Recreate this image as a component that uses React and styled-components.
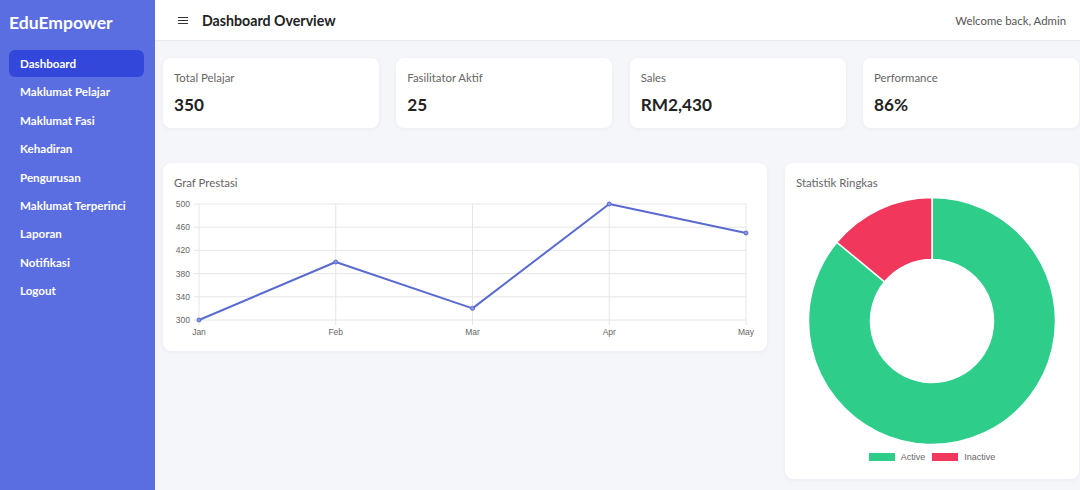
import React from "react";
import styled, { createGlobalStyle } from "styled-components";

const Global = createGlobalStyle`
  html, body { margin: 0; padding: 0; }
  body {
    font-family: "Lato", "Noto Sans", sans-serif;
    background: #f5f6fa;
    color: #222;
  }
  * { box-sizing: border-box; }
`;

const Layout = styled.div`
  display: flex;
  width: 1080px;
  height: 490px;
  overflow: hidden;
`;

const Sidebar = styled.aside`
  width: 155px;
  flex: none;
  background: #5b6ee1;
  padding: 0 11px 0 9px;
  display: flex;
  flex-direction: column;
`;

const Logo = styled.div`
  height: 46px;
  display: flex;
  align-items: center;
  color: #fff;
  font-size: 17.5px;
  font-weight: 700;
  padding-bottom: 1px;
`;

const Nav = styled.nav`
  display: flex;
  flex-direction: column;
  gap: 1.4px;
  margin-top: 4px;
`;

const NavItem = styled.div`
  height: 27px;
  display: flex;
  align-items: center;
  padding-left: 11px;
  border-radius: 6px;
  color: #fff;
  font-size: 11.6px;
  font-weight: 700;
  background: ${(p) => (p.$active ? "#3347db" : "transparent")};
`;

const Main = styled.main`
  flex: 1;
  display: flex;
  flex-direction: column;
  min-width: 0;
`;

const Header = styled.header`
  height: 41px;
  flex: none;
  background: #fff;
  border-bottom: 1px solid #eaebf0;
  display: flex;
  align-items: center;
  padding: 0 14px 0 23px;
`;

const Title = styled.h1`
  margin: 0 0 0 14px;
  font-size: 14.2px;
  font-weight: 700;
  color: #222;
`;

const Welcome = styled.div`
  margin-left: auto;
  font-size: 11.4px;
  color: #555;
`;

const Content = styled.div`
  padding: 17px 1px 0 8px;
  display: flex;
  flex-direction: column;
  gap: 35px;
`;

const StatGrid = styled.div`
  display: grid;
  grid-template-columns: repeat(4, 1fr);
  gap: 17.33px;
`;

const Card = styled.div`
  background: #fff;
  border-radius: 8px;
  box-shadow: 0 1px 4px rgba(30, 40, 90, 0.05);
  padding: 0 11px ${(p) => p.$bottom || "12px"};
`;

const StatLabel = styled.div`
  font-size: 11.4px;
  line-height: 14px;
  color: #666;
  margin-top: 13px;
`;

const StatValue = styled.div`
  font-size: 17.2px;
  line-height: 22px;
  font-weight: 700;
  color: #222;
  margin-top: 9px;
`;

const ChartRow = styled.div`
  display: grid;
  grid-template-columns: 604px 294px;
  gap: 18px;
  align-items: start;
`;

const ChartTitle = styled.div`
  font-size: 11.4px;
  line-height: 14px;
  color: #666;
  margin-top: 13px;
  margin-bottom: ${(p) => p.$gap || "7px"};
`;

const LineSvg = styled.svg`
  display: block;
  font-family: "Liberation Sans", Arial, sans-serif;
`;

const DonutSvg = styled.svg`
  display: block;
`;

const Legend = styled.div`
  display: flex;
  justify-content: center;
  align-items: center;
  gap: 7px;
  margin-top: 5px;
  height: 10px;
  font-family: "Liberation Sans", Arial, sans-serif;
  font-size: 9px;
  color: #666;
`;

const LegendItem = styled.div`
  display: flex;
  align-items: center;
  gap: 6px;
`;

const Swatch = styled.span`
  width: 26px;
  height: 8px;
  background: ${(p) => p.$color};
`;

const navItems = [
  "Dashboard",
  "Maklumat Pelajar",
  "Maklumat Fasi",
  "Kehadiran",
  "Pengurusan",
  "Maklumat Terperinci",
  "Laporan",
  "Notifikasi",
  "Logout",
];

const stats = [
  { label: "Total Pelajar", value: "350" },
  { label: "Fasilitator Aktif", value: "25" },
  { label: "Sales", value: "RM2,430" },
  { label: "Performance", value: "86%" },
];

function MenuIcon() {
  return (
    <svg width="10" height="9" viewBox="0 0 10 9">
      <g stroke="#333" strokeWidth="1">
        <line x1="0" y1="1.5" x2="10" y2="1.5" />
        <line x1="0" y1="4.5" x2="10" y2="4.5" />
        <line x1="0" y1="7.5" x2="10" y2="7.5" />
      </g>
    </svg>
  );
}

function LineChart() {
  const W = 582;
  const H = 148;
  const x0 = 25;
  const x1 = 572;
  const y0 = 123; // 300
  const yTop = 7; // 500
  const labels = ["Jan", "Feb", "Mar", "Apr", "May"];
  const data = [300, 400, 320, 500, 450];
  const ticks = [300, 340, 380, 420, 460, 500];
  const xs = labels.map((_, i) => x0 + ((x1 - x0) * i) / (labels.length - 1));
  const yOf = (v) => y0 - ((v - 300) / 200) * (y0 - yTop);
  const pts = data.map((v, i) => `${xs[i]},${yOf(v)}`).join(" ");
  return (
    <LineSvg width={W} height={H} viewBox={`0 0 ${W} ${H}`}>
      {ticks.map((t) => (
        <g key={t}>
          <line x1={x0 - 5} x2={x1} y1={yOf(t)} y2={yOf(t)} stroke="#e6e6e6" strokeWidth="1" />
          <text x={16} y={yOf(t) + 3} fontSize="8.5" fill="#666" textAnchor="end">
            {t}
          </text>
        </g>
      ))}
      {xs.map((x, i) => (
        <g key={i}>
          <line x1={x} x2={x} y1={yTop} y2={y0 + 5} stroke="#e6e6e6" strokeWidth="1" />
          <text x={x} y={y0 + 15} fontSize="8.5" fill="#666" textAnchor="middle">
            {labels[i]}
          </text>
        </g>
      ))}
      <polyline points={pts} fill="none" stroke="#5a6bd0" strokeWidth="2" strokeLinejoin="round" />
      {data.map((v, i) => (
        <circle key={i} cx={xs[i]} cy={yOf(v)} r="2" fill="#8a97de" stroke="#5a6bd0" strokeWidth="1" />
      ))}
    </LineSvg>
  );
}

function arcPath(cx, cy, R, r, a0, a1) {
  const p = (rad, a) => [cx + rad * Math.sin(a), cy - rad * Math.cos(a)];
  const large = a1 - a0 > Math.PI ? 1 : 0;
  const [ox0, oy0] = p(R, a0);
  const [ox1, oy1] = p(R, a1);
  const [ix1, iy1] = p(r, a1);
  const [ix0, iy0] = p(r, a0);
  return `M${ox0},${oy0} A${R},${R} 0 ${large} 1 ${ox1},${oy1} L${ix1},${iy1} A${r},${r} 0 ${large} 0 ${ix0},${iy0} Z`;
}

function Donut() {
  const cx = 136;
  const cy = 125;
  const R = 123.5;
  const r = 61.5;
  const split = (86 / 100) * Math.PI * 2;
  return (
    <DonutSvg width="272" height="251" viewBox="0 0 272 251">
      <path d={arcPath(cx, cy, R, r, 0, split)} fill="#2ecd8a" stroke="#fff" strokeWidth="1.5" />
      <path d={arcPath(cx, cy, R, r, split, Math.PI * 2 - 0.0001)} fill="#f1375c" stroke="#fff" strokeWidth="1.5" />
    </DonutSvg>
  );
}

export default function App() {
  return (
    <>
      <Global />
      <Layout>
        <Sidebar>
          <Logo>EduEmpower</Logo>
          <Nav>
            {navItems.map((n, i) => (
              <NavItem key={n} $active={i === 0}>
                {n}
              </NavItem>
            ))}
          </Nav>
        </Sidebar>
        <Main>
          <Header>
            <MenuIcon />
            <Title>Dashboard Overview</Title>
            <Welcome>Welcome back, Admin</Welcome>
          </Header>
          <Content>
            <StatGrid>
              {stats.map((s) => (
                <Card key={s.label}>
                  <StatLabel>{s.label}</StatLabel>
                  <StatValue>{s.value}</StatValue>
                </Card>
              ))}
            </StatGrid>
            <ChartRow>
              <Card $bottom="6px">
                <ChartTitle>Graf Prestasi</ChartTitle>
                <LineChart />
              </Card>
              <Card $bottom="17px">
                <ChartTitle $gap="6px">Statistik Ringkas</ChartTitle>
                <Donut />
                <Legend>
                  <LegendItem>
                    <Swatch $color="#2ecd8a" />
                    Active
                  </LegendItem>
                  <LegendItem>
                    <Swatch $color="#f1375c" />
                    Inactive
                  </LegendItem>
                </Legend>
              </Card>
            </ChartRow>
          </Content>
        </Main>
      </Layout>
    </>
  );
}
